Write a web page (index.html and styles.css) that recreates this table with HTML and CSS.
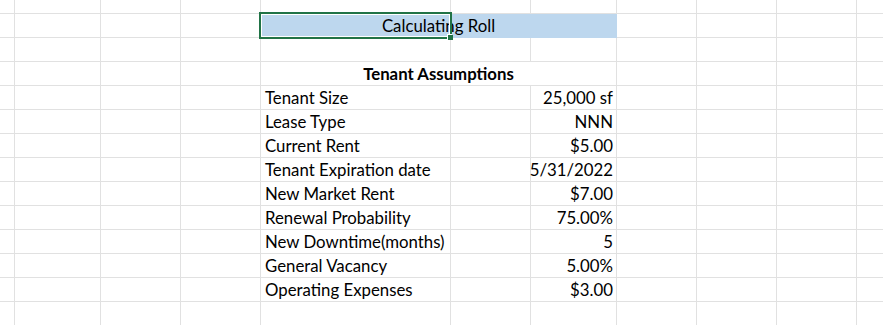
FILE: index.html
```html
<!DOCTYPE html>
<html lang="en">
<head>
<meta charset="utf-8">
<title>Calculating Roll</title>
<link rel="stylesheet" href="styles.css">
</head>
<body>
<div class="sheet">
  <div class="row top"><span></span><span></span><span></span><span></span><span></span><span></span><span></span><span></span><span></span><span></span><span></span></div>
  <div class="row"><span></span><span></span><span></span><span></span><span class="merge title">Calculating Roll</span><span></span><span></span><span></span><span></span></div>
  <div class="row"><span></span><span></span><span></span><span></span><span></span><span></span><span></span><span></span><span></span><span></span><span></span></div>
  <div class="row"><span></span><span></span><span></span><span></span><span class="merge head">Tenant Assumptions</span><span></span><span></span><span></span><span></span></div>
  <div class="row"><span></span><span></span><span></span><span></span><span class="lbl">Tenant Size</span><span></span><span class="val">25,000 sf</span><span></span><span></span><span></span><span></span></div>
  <div class="row"><span></span><span></span><span></span><span></span><span class="lbl">Lease Type</span><span></span><span class="val">NNN</span><span></span><span></span><span></span><span></span></div>
  <div class="row"><span></span><span></span><span></span><span></span><span class="lbl">Current Rent</span><span></span><span class="val">$5.00</span><span></span><span></span><span></span><span></span></div>
  <div class="row"><span></span><span></span><span></span><span></span><span class="lbl">Tenant Expiration date</span><span></span><span class="val">5/31/2022</span><span></span><span></span><span></span><span></span></div>
  <div class="row"><span></span><span></span><span></span><span></span><span class="lbl">New Market Rent</span><span></span><span class="val">$7.00</span><span></span><span></span><span></span><span></span></div>
  <div class="row"><span></span><span></span><span></span><span></span><span class="lbl">Renewal Probability</span><span></span><span class="val">75.00%</span><span></span><span></span><span></span><span></span></div>
  <div class="row"><span></span><span></span><span></span><span></span><span class="lbl">New Downtime(months)</span><span></span><span class="val">5</span><span></span><span></span><span></span><span></span></div>
  <div class="row"><span></span><span></span><span></span><span></span><span class="lbl">General Vacancy</span><span></span><span class="val">5.00%</span><span></span><span></span><span></span><span></span></div>
  <div class="row"><span></span><span></span><span></span><span></span><span class="lbl">Operating Expenses</span><span></span><span class="val">$3.00</span><span></span><span></span><span></span><span></span></div>
  <div class="row"><span></span><span></span><span></span><span></span><span></span><span></span><span></span><span></span><span></span><span></span><span></span></div>
  <div class="selection"><i class="handle"></i></div>
</div>
</body>
</html>
```
FILE: styles.css
```css
html, body {
  margin: 0;
  padding: 0;
  background: #ffffff;
  overflow: hidden;
}
body {
  width: 883px;
  height: 325px;
  font-family: Lato, "Noto Sans", sans-serif;
  font-size: 16.8px;
  color: #000;
}
.sheet {
  position: relative;
  display: flex;
  flex-direction: column;
}
.row {
  display: grid;
  grid-template-columns: 15px 86px 80px 80px 190px 80px 86px 80px 80px 80px 80px;
  height: 24px;
}
.row.top {
  height: 14px;
}
.row > span {
  box-sizing: border-box;
  border-right: 1px solid #e1e1e1;
  border-bottom: 1px solid #e1e1e1;
  display: flex;
  align-items: flex-end;
  line-height: 20px;
  padding-bottom: 1px;
  white-space: nowrap;
}
.merge {
  grid-column: span 3;
  justify-content: center;
}
.title {
  background: #bdd7ee;
  border-color: #bdd7ee !important;
}
.head {
  font-weight: bold;
}
.lbl {
  padding-left: 4px;
}
.val {
  justify-content: flex-end;
  padding-right: 3px;
}
.selection {
  position: absolute;
  left: 259px;
  top: 12px;
  width: 193px;
  height: 27px;
  box-sizing: border-box;
  border: 2px solid #217346;
  box-shadow: inset 0 0 0 1px #fff;
}
.handle {
  position: absolute;
  right: -3px;
  bottom: -3px;
  width: 5px;
  height: 5px;
  background: #217346;
  box-shadow: -1px -1px 0 0 #fff;
}
```
